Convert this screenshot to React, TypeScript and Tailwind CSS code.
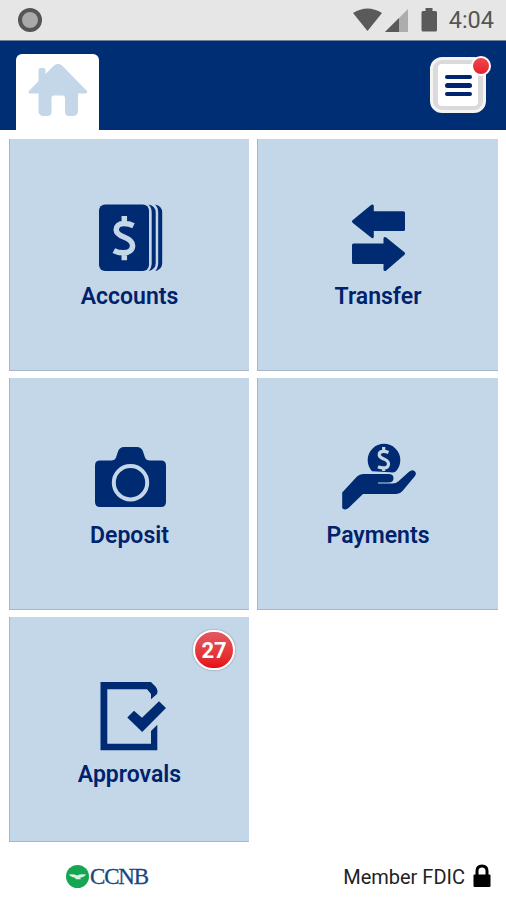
import type { ReactNode } from "react";

function AccountsIcon() {
  return (
    <svg width="80" height="72" viewBox="0 0 80 72" fill="#002b72" aria-hidden="true">
      <rect x="9" y="2.5" width="50" height="66.5" rx="6" />
      <path d="M58.500 2.500q7.200 1.500 7.200 8v50.500q0 6.500-7.200 8q3.200-3 3.200-8V10.500q0-5-3.200-8z" />
      <path d="M65 2.500q7.200 1.500 7.200 8v50.500q0 6.500-7.200 8q3.200-3 3.200-8V10.500q0-5-3.200-8z" />
      <path
        d="M43.500 23.700q-4.500-2.200-9.300-2.200c-5.500 0-8 2.800-8 6.200 0 3.800 3.200 5.600 8.200 7.600 5 2 8.200 4 8.200 8.200 0 4.500-3.800 7.300-9 7.300q-5.600 0-9.800-2.200M34.300 14v7.500M34.300 50v8.300"
        fill="none"
        stroke="#c4d7e8"
        strokeWidth="5.500"
      />
    </svg>
  );
}

function TransferIcon() {
  return (
    <svg
      width="80"
      height="72"
      viewBox="0 0 80 72"
      fill="#002b72"
      stroke="#002b72"
      strokeWidth="3"
      strokeLinejoin="round"
      aria-hidden="true"
    >
      <path d="M15.500 19.500 34.300 4v6.700H65.500v16.800H34.300v7.200z" />
      <path d="M65.500 51.500 47 36.500v6.500H15.500v17.500H47v7z" />
    </svg>
  );
}

function DepositIcon() {
  return (
    <svg width="80" height="72" viewBox="0 0 80 72" fill="#002b72" aria-hidden="true">
      <path d="M10 19.500h11q4 0 5-3l2-6q1.500-4.500 6-4.500h13q4.500 0 6 4.500l2 6q1 3 5 3h11q5 0 5 5V61q0 5-5 5H10q-5 0-5-5V24.500q0-5 5-5z" />
      <circle cx="40.500" cy="41.700" r="16.700" fill="none" stroke="#c4d7e8" strokeWidth="4" />
    </svg>
  );
}

function PaymentsIcon() {
  return (
    <svg width="80" height="72" viewBox="0 0 80 72" fill="#002b72" aria-hidden="true">
      <path d="M34 30.200a16.300 16.300 0 1 1 24 0q-2.500 2-5.500 1z" />
      <path
        d="M50.500 11.500q-2.500-1.200-5-1.200c-2.900 0-4.300 1.500-4.300 3.400 0 2.200 2 3.200 4.500 4.200 2.800 1.200 4.800 2.400 4.800 5 0 2.700-2.200 4-5 4q-3 0-5.500-1.200M45.700 6v4.500M45.700 26.500v3.500"
        fill="none"
        stroke="#c4d7e8"
        strokeWidth="3.200"
      />
      <path d="M4.200 51.500 19 35.500q2.500-2.500 6-2.500h25.500q5 0 5 4.200t-5 4.200H40v1.200h14.500q3.500 0 6-2.300L71 30.700q3-2.700 5.500-.7t.5 5L64.500 50q-2.500 3-6 3H25L10.500 67q-3 2.500-6 .5-.5-1-.3-3z" />
    </svg>
  );
}

function ApprovalsIcon() {
  return (
    <svg width="80" height="72" viewBox="0 0 80 72" fill="#002b72" aria-hidden="true">
      <path d="M10.500 2H61L65.500 6.500q3 4 1.500 7.500l-6 5.300V14l-4-4.700H17.300v54.400H61V51l6.300-6.300v25.600H10.500z" />
      <path d="M37.300 37.500 44 30.700 52 37.700 69 21.300 76 28 52.200 52z" />
    </svg>
  );
}

function HomeIcon() {
  return (
    <svg width="60" height="52" viewBox="0 0 60 52" fill="#c4d7e8" aria-hidden="true">
      <path d="M26.500 1q3.500-2 7 0L59 27q1 2-1.500 2.500H50V48q-1 3.500-4 4h-5.500q-3.500-.5-3.500-4V34q0-2.500-2.500-2.500H26q-2.500 0-2.500 2.500v14q0 3.500-3.500 4h-5.500q-3-.5-4-4V29.500H2Q-.5 29 1 27l9.500-10V6q0-2 2-2h3q2 0 2 2v4z" />
    </svg>
  );
}

function StatusBar() {
  return (
    <div className="flex h-[41px] items-center justify-between border-b border-[#7480a0] bg-[#e6e6e6] pr-3 pl-[18px]">
      <span className="h-6 w-6 rounded-full border-4 border-[#555] bg-[#a9a9a9]" />
      <div className="flex items-center">
        <svg width="88" height="26" viewBox="0 0 88 26" fill="#5a5a5a" aria-hidden="true">
          <path d="M0 6Q14.500 -3 29 6L14.500 24z" />
          <path d="M55 2v23H32z" fill="#adadad" />
          <path d="M46 11V25H32z" />
          <path d="M72.500 1h7v3h3q1.500 0 1.500 1.500v17.500q0 1.500-1.500 1.500H70q-1.500 0-1.500-1.500V5.500q0-1.500 1.500-1.500h2.500z" />
        </svg>
        <span className="ml-[8px] pt-px text-[23.500px] leading-none text-[#555]">4:04</span>
      </div>
    </div>
  );
}

function Header() {
  return (
    <header className="flex h-[89px] items-end justify-between bg-[#002e74] pr-5 pl-4">
      <button
        type="button"
        aria-label="Home"
        className="flex h-[76px] w-[83px] justify-center rounded-t-md bg-white pt-[10px]"
      >
        <HomeIcon />
      </button>
      <button
        type="button"
        aria-label="Menu"
        className="relative mb-[17px] flex h-[56px] w-[56px] items-center justify-center rounded-xl border-[3px] border-[#f4f4f4] bg-[#dadada]"
      >
        <span className="flex h-[42px] w-10 flex-col items-center justify-center gap-1 rounded-sm bg-white pt-px">
          <span className="h-[4.5px] w-[27px] rounded-full bg-[#002470]" />
          <span className="h-[4.5px] w-[27px] rounded-full bg-[#002470]" />
          <span className="h-[4.5px] w-[27px] rounded-full bg-[#002470]" />
        </span>
        <span className="absolute -top-[4px] -right-[8px] h-5 w-5 rounded-full border-2 border-white bg-linear-to-b from-[#f24450] to-[#e5202c]" />
      </button>
    </header>
  );
}

type TileProps = {
  label: string;
  icon: ReactNode;
  badge?: number;
};

function Tile({ label, icon, badge }: TileProps) {
  return (
    <button
      type="button"
      className="relative flex flex-col items-center border-b border-l border-[#a9b6c6] bg-[#c4d7e8] pt-[63px] text-[#00226c]"
    >
      {icon}
      <span className="mt-[10px] text-[23px] leading-[26px] font-semibold">{label}</span>
      {badge !== undefined && (
        <span className="absolute top-[13px] right-[14px] flex h-10 w-[42px] items-center justify-center rounded-full border-2 border-white bg-linear-to-b from-[#e45560] to-[#e60814] text-[22px] font-bold text-white shadow-[0_0_2px_#777]">
          {badge}
        </span>
      )}
    </button>
  );
}

const tiles: ReadonlyArray<TileProps> = [
  { label: "Accounts", icon: <AccountsIcon /> },
  { label: "Transfer", icon: <TransferIcon /> },
  { label: "Deposit", icon: <DepositIcon /> },
  { label: "Payments", icon: <PaymentsIcon /> },
  { label: "Approvals", icon: <ApprovalsIcon />, badge: 27 },
];

function Footer() {
  return (
    <footer className="flex h-[58px] items-center justify-between pt-[10px] pr-[15px] pl-[66px]">
      <div className="flex items-center">
        <svg width="23" height="23" viewBox="0 0 23 23" aria-hidden="true">
          <circle cx="11.500" cy="11.500" r="11.500" fill="#16a653" />
          <path
            d="M3 9.500q4.500-1 8 1 4-2 9-1-1.500 2.500-6 3.200l1 1.500h-5l-1-1.500Q4.500 12 3 9.500z"
            fill="#d9f2e2"
          />
        </svg>
        <span className="ml-px font-['Liberation_Serif',serif] text-[23px] leading-none tracking-[-1.2px] text-[#1d467e] [-webkit-text-stroke:0.3px_#1d467e]">
          CCNB
        </span>
      </div>
      <div className="flex items-center">
        <span className="pt-px text-[20px] leading-none text-[#222]">Member FDIC</span>
        <svg width="18" height="24" viewBox="0 0 18 24" className="ml-2" aria-hidden="true">
          <path d="M4 12V7q0-5 5-5t5 5v5" fill="none" stroke="#000" strokeWidth="3" />
          <rect x="0.500" y="10.500" width="17" height="12.500" rx="1" />
        </svg>
      </div>
    </footer>
  );
}

export default function App() {
  return (
    <div className="flex h-[900px] w-[506px] flex-col bg-white font-['Roboto',sans-serif]">
      <StatusBar />
      <Header />
      <main className="grid grid-cols-[240px_241px] grid-rows-[232px_232px_225px] gap-x-2 gap-y-[7px] pt-[9px] pl-[9px]">
        {tiles.map((tile) => (
          <Tile key={tile.label} {...tile} />
        ))}
      </main>
      <Footer />
    </div>
  );
}
